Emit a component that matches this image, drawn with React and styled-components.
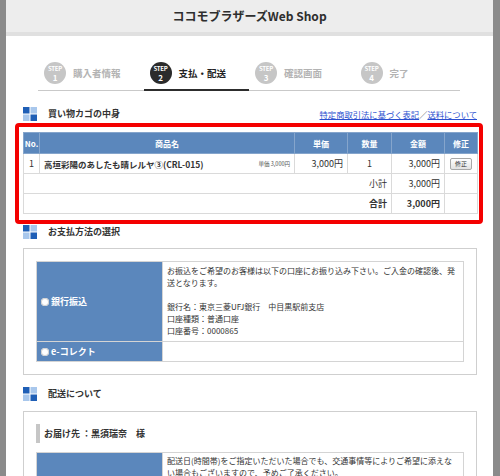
import React from "react";
import styled, { createGlobalStyle } from "styled-components";

const GlobalStyle = createGlobalStyle`
  html, body {
    margin: 0;
    padding: 0;
    background: #fff;
  }
  body {
    font-family: "Noto Sans CJK JP", "Noto Sans", sans-serif;
    color: #333;
  }
`;

const steps = [
  { no: 1, label: "購入者情報" },
  { no: 2, label: "支払・配送", active: true },
  { no: 3, label: "確認画面" },
  { no: 4, label: "完了" },
];

const SquareIcon = () => (
  <svg width="14" height="14" viewBox="0 0 14 14">
    <rect x="0" y="0" width="6.5" height="6.5" fill="#1f5fb6" />
    <rect x="7.5" y="0" width="6.5" height="6.5" fill="#a8c7ec" />
    <rect x="0" y="7.5" width="6.5" height="6.5" fill="#a8c7ec" />
    <rect x="7.5" y="7.5" width="6.5" height="6.5" fill="#1f5fb6" />
  </svg>
);

const App = () => {
  return (
    <>
      <GlobalStyle />
      <Frame>
        <Header>
          <Title>ココモブラザーズWeb Shop</Title>
        </Header>

        <Steps>
          {steps.map((s) => (
            <Step key={s.no} $active={s.active}>
              <Circle $active={s.active}>
                <StepWord>STEP</StepWord>
                <StepNum>{s.no}</StepNum>
              </Circle>
              <StepLabel $active={s.active}>{s.label}</StepLabel>
            </Step>
          ))}
        </Steps>

        <Section>
          <Heading $top={16}>
            <SquareIcon />
            <HeadingText>買い物カゴの中身</HeadingText>
            <Links>
              <a href="#">特定商取引法に基づく表記</a>
              <Slash>／</Slash>
              <a href="#">送料について</a>
            </Links>
          </Heading>

          <Highlight>
            <CartTable>
              <colgroup>
                <col style={{ width: 16 }} />
                <col style={{ width: 255 }} />
                <col style={{ width: 53 }} />
                <col style={{ width: 44 }} />
                <col style={{ width: 53 }} />
                <col style={{ width: 33 }} />
              </colgroup>
              <thead>
                <tr>
                  <Th>No.</Th>
                  <Th>商品名</Th>
                  <Th>単価</Th>
                  <Th>数量</Th>
                  <Th>金額</Th>
                  <Th>修正</Th>
                </tr>
              </thead>
              <tbody>
                <tr>
                  <Td $align="center">1</Td>
                  <Td>
                    <NameWrap>
                      <ItemName>高垣彩陽のあしたも晴レルヤ③(CRL-015)</ItemName>
                      <UnitNote>単価 3,000円</UnitNote>
                    </NameWrap>
                  </Td>
                  <Td $align="right">3,000円</Td>
                  <Td $align="center">1</Td>
                  <Td $align="right">3,000円</Td>
                  <Td $align="center">
                    <EditButton>修正</EditButton>
                  </Td>
                </tr>
                <tr>
                  <Td colSpan={4} $align="right">小計</Td>
                  <Td $align="right">3,000円</Td>
                  <Td />
                </tr>
                <tr>
                  <Td colSpan={4} $align="right" $bold>合計</Td>
                  <Td $align="right" $bold>3,000円</Td>
                  <Td />
                </tr>
              </tbody>
            </CartTable>
          </Highlight>

          <Heading $top={1}>
            <SquareIcon />
            <HeadingText>お支払方法の選択</HeadingText>
          </Heading>

          <Box $top={9}>
            <InfoTable>
              <tbody>
                <tr>
                  <LabelCell>
                    <Radio />
                    銀行振込
                  </LabelCell>
                  <TextCell $bottom={4}>
                    <TextLine>お振込をご希望のお客様は以下の口座にお振り込み下さい。ご入金の確認後、発</TextLine>
                    <TextLine>送となります。</TextLine>
                    <TextLine $gap={12}>銀行名：東京三菱UFJ銀行　中目黒駅前支店</TextLine>
                    <TextLine>口座種類：普通口座</TextLine>
                    <TextLine>口座番号：0000865</TextLine>
                  </TextCell>
                </tr>
                <tr>
                  <LabelCell $h={19}>
                    <Radio />
                    e-コレクト
                  </LabelCell>
                  <TextCell />
                </tr>
              </tbody>
            </InfoTable>
          </Box>

          <Heading $top={12}>
            <SquareIcon />
            <HeadingText>配送について</HeadingText>
          </Heading>

          <Box $top={10}>
            <Recipient>お届け先 ：黒須瑞奈　様</Recipient>
            <InfoTable>
              <tbody>
                <tr>
                  <LabelCell />
                  <TextCell $top={2}>
                    <TextLine>配送日(時間帯)をご指定いただいた場合でも、交通事情等によりご希望に添えな</TextLine>
                    <TextLine>い場合もございますので、予めご了承ください。</TextLine>
                  </TextCell>
                </tr>
              </tbody>
            </InfoTable>
          </Box>
        </Section>
      </Frame>
    </>
  );
};

const Frame = styled.div`
  width: 500px;
  height: 476px;
  box-sizing: border-box;
  border-left: 6px solid #8b8b8b;
  border-right: 7px solid #8b8b8b;
  overflow: hidden;
  background: #fff;
`;

const Header = styled.header`
  height: 32px;
  background: #ededed;
  border-bottom: 4px solid #e0e0e0;
  display: flex;
  align-items: center;
  justify-content: center;
`;

const Title = styled.h1`
  margin: 0;
  font-size: 12px;
  line-height: 14px;
  font-weight: 700;
  color: #2e2e2e;
`;

const Steps = styled.div`
  display: flex;
  margin: 26px 33px 0 32px;
`;

const Step = styled.div`
  flex: 1;
  display: flex;
  align-items: center;
  padding: 0 0 ${({ $active }) => ($active ? 5 : 6)}px 6px;
  border-bottom: ${({ $active }) =>
    $active ? "2px solid #2d2d2d" : "1px solid #c9c9c9"};
`;

const Circle = styled.div`
  width: 22px;
  height: 22px;
  border-radius: 50%;
  background: ${({ $active }) => ($active ? "#2b2b2b" : "#c6c6c6")};
  color: #fff;
  display: flex;
  flex-direction: column;
  align-items: center;
  justify-content: center;
  font-weight: 700;
`;

const StepWord = styled.span`
  font-size: 6px;
  line-height: 8px;
  letter-spacing: -0.3px;
`;

const StepNum = styled.span`
  font-size: 8px;
  line-height: 9px;
`;

const StepLabel = styled.span`
  margin-left: 7px;
  font-size: 9.5px;
  line-height: 12px;
  font-weight: 700;
  color: ${({ $active }) => ($active ? "#222" : "#b3b3b3")};
`;

const Section = styled.div`
  padding: 0 16px 0 17px;
`;

const Heading = styled.div`
  display: flex;
  align-items: center;
  height: 14px;
  margin-top: ${({ $top }) => $top}px;
`;

const HeadingText = styled.span`
  margin-left: 11px;
  font-size: 9px;
  line-height: 14px;
  font-weight: 700;
  color: #333;
`;

const Links = styled.span`
  margin-left: auto;
  font-size: 8.3px;
  line-height: 12px;
  a {
    color: #2b4fcf;
    text-decoration: underline;
  }
`;

const Slash = styled.span`
  color: #555;
`;

const Highlight = styled.div`
  margin: 2px -6px 0 -8px;
  border: 4px solid #f40000;
  border-radius: 4px;
  padding: 5px 2px 6px 4px;
`;

const CartTable = styled.table`
  width: 454px;
  border-collapse: collapse;
  table-layout: fixed;
  border: 1px solid #cfcfcf;
`;

const Th = styled.th`
  height: 20px;
  padding: 0;
  background: #5b87bc;
  color: #fff;
  font-size: 8px;
  font-weight: 700;
  text-align: center;
  border: 1px solid #85a5cc;
`;

const Td = styled.td`
  height: 19px;
  padding: 0 4px;
  border: 1px solid #dadada;
  font-size: 9px;
  line-height: 12px;
  color: #333;
  text-align: ${({ $align }) => $align || "left"};
  font-weight: ${({ $bold }) => ($bold ? 700 : 400)};
  white-space: nowrap;
`;

const NameWrap = styled.div`
  display: flex;
  align-items: center;
  justify-content: space-between;
`;

const ItemName = styled.span`
  font-size: 8.5px;
  font-weight: 700;
  color: #333;
`;

const UnitNote = styled.span`
  font-size: 5.5px;
  color: #555;
`;

const EditButton = styled.button`
  font-family: inherit;
  font-size: 6px;
  line-height: 8px;
  padding: 1px 4px;
  color: #333;
  border: 1px solid #a8a8a8;
  border-radius: 2px;
  background: linear-gradient(#ffffff, #e2e2e2);
`;

const Box = styled.div`
  margin-top: ${({ $top }) => $top}px;
  border: 1px solid #cfcfcf;
  padding: 12px;
`;

const InfoTable = styled.table`
  width: 100%;
  border-collapse: collapse;
  table-layout: fixed;
`;

const LabelCell = styled.td`
  width: 117px;
  height: ${({ $h }) => ($h ? `${$h}px` : "auto")};
  padding: 0 4px;
  background: #5b87bc;
  border: 1px solid #d4d4d4;
  color: #fff;
  font-size: 9px;
  line-height: 12px;
  font-weight: 700;
  vertical-align: middle;
  white-space: nowrap;
`;

const Radio = styled.span`
  display: inline-block;
  width: 8px;
  height: 8px;
  border-radius: 50%;
  background: #fff;
  box-shadow: inset 0 0 0 1px #d0d0d0;
  margin-right: 2px;
  vertical-align: -1px;
`;

const TextCell = styled.td`
  padding: ${({ $top }) => ($top != null ? $top : 3)}px 3px
    ${({ $bottom }) => $bottom || 3}px 4px;
  border: 1px solid #d4d4d4;
  color: #333;
  vertical-align: top;
`;

const TextLine = styled.div`
  font-size: 8px;
  line-height: 12px;
  height: 12px;
  margin-top: ${({ $gap }) => $gap || 0}px;
  white-space: nowrap;
`;

const Recipient = styled.div`
  border-left: 4px solid #c6c6c6;
  padding-left: 4px;
  height: 19px;
  line-height: 19px;
  font-size: 9px;
  font-weight: 700;
  color: #333;
  margin-bottom: 9px;
`;

export default App;
